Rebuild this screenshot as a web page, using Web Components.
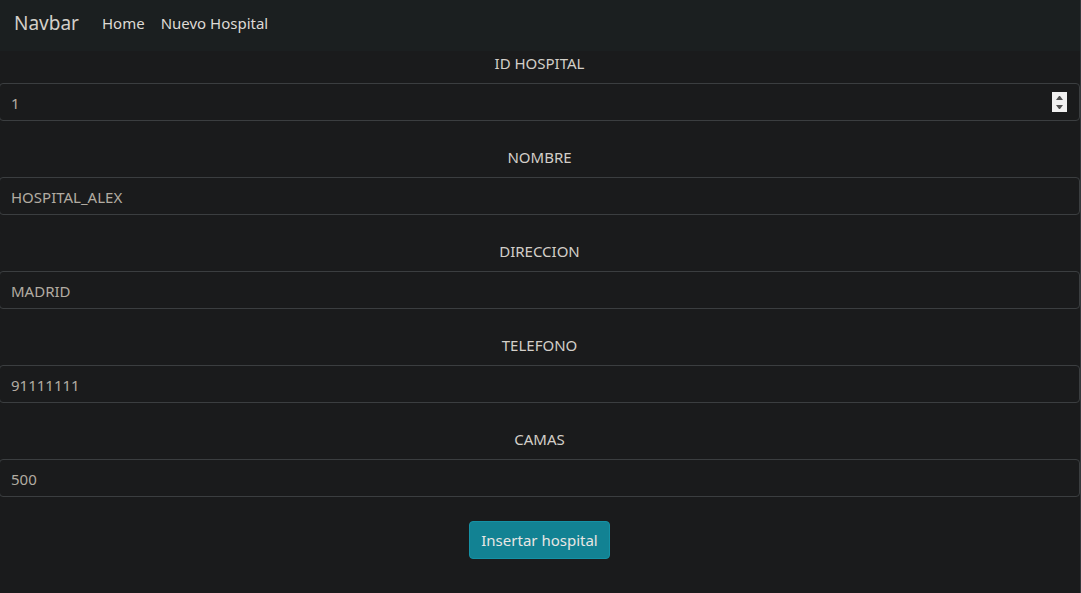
<!DOCTYPE html>
<html lang="es">
<head>
<meta charset="utf-8">
<meta name="viewport" content="width=device-width, initial-scale=1">
<title>Nuevo Hospital</title>
<style>
  html { background: #1a1b1c; }
  body {
    margin: 0;
    min-height: 100vh;
    box-sizing: border-box;
    border-right: 1px solid #35383b;
    color: #d3cfc9;
    font: 15px/24px "Noto Sans", "Open Sans", sans-serif;
    overflow-x: hidden;
  }
</style>
</head>
<body>
<hospital-app></hospital-app>

<template id="app-template">
  <style>
    :host { display: block; }
    main { margin-left: -1px; }
  </style>
  <nav-bar brand="Navbar">
    <nav-item href="#home">Home</nav-item>
    <nav-item href="#create">Nuevo Hospital</nav-item>
  </nav-bar>
  <main><hospital-form></hospital-form></main>
</template>

<template id="nav-template">
  <style>
    :host { display: block; }
    nav {
      display: flex;
      align-items: center;
      min-height: 51px;
      box-sizing: border-box;
      padding: 0 14px 5px;
      background: #1b1f20;
    }
    .brand {
      margin-right: 15px;
      color: #d3cfc9;
      font-size: 19px;
      line-height: 30px;
      text-decoration: none;
    }
    .links { display: flex; }
  </style>
  <nav>
    <a class="brand" href="#"></a>
    <div class="links"><slot></slot></div>
  </nav>
</template>

<template id="item-template">
  <style>
    :host { display: block; }
    a { display: block; padding: 8px; color: #dedad5; text-decoration: none; }
  </style>
  <a><slot></slot></a>
</template>

<template id="form-template">
  <style>
    :host { display: block; }
    form { display: grid; gap: 24px; }
    teal-button { justify-self: center; }
  </style>
  <form>
    <form-field label="ID HOSPITAL" type="number" value="1"></form-field>
    <form-field label="NOMBRE" type="text" value="HOSPITAL_ALEX"></form-field>
    <form-field label="DIRECCION" type="text" value="MADRID"></form-field>
    <form-field label="TELEFONO" type="text" value="91111111"></form-field>
    <form-field label="CAMAS" type="text" value="500"></form-field>
    <teal-button>Insertar hospital</teal-button>
  </form>
</template>

<template id="field-template">
  <style>
    :host { display: grid; gap: 8px; }
    label { text-align: center; }
    input {
      width: 100%;
      height: 38px;
      box-sizing: border-box;
      margin: 0;
      padding: 7px 12px 5px 11px;
      border: 1px solid #3b3e40;
      border-radius: 4px;
      background: #1a1b1c;
      color: #b2aca2;
      font: inherit;
      outline: none;
    }
    input:focus { border-color: #138496; }
    input::-webkit-inner-spin-button {
      -webkit-appearance: none;
      opacity: 1;
      width: 15px;
      height: 20px;
      margin: 0 0 2px;
      background: #f0f0f0 url("data:image/svg+xml,%3Csvg xmlns='http://www.w3.org/2000/svg' width='15' height='20'%3E%3Cpath fill='%23505050' d='M4 8l3-4h1l3 4zM4 13h7l-3 4H7z'/%3E%3C/svg%3E") no-repeat;
    }
  </style>
  <label for="control"></label>
  <input id="control">
</template>

<template id="button-template">
  <style>
    :host { display: block; }
    button {
      display: block;
      min-height: 38px;
      padding: 6px 11px;
      border: 1px solid #1591a5;
      border-radius: 4px;
      background: #128293;
      color: #e8e6e3;
      font: inherit;
      cursor: pointer;
    }
  </style>
  <button type="button"><slot></slot></button>
</template>

<script>
  class TemplateElement extends HTMLElement {
    constructor() {
      super();
      const template = document.getElementById(this.constructor.template);
      this.attachShadow({ mode: "open" }).append(template.content.cloneNode(true));
    }
  }

  customElements.define("nav-item", class extends TemplateElement {
    static template = "item-template";
    connectedCallback() {
      this.shadowRoot.querySelector("a").href = this.getAttribute("href");
    }
  });

  customElements.define("nav-bar", class extends TemplateElement {
    static template = "nav-template";
    connectedCallback() {
      this.shadowRoot.querySelector(".brand").textContent = this.getAttribute("brand");
    }
  });

  customElements.define("form-field", class extends TemplateElement {
    static template = "field-template";
    connectedCallback() {
      const input = this.shadowRoot.querySelector("input");
      this.shadowRoot.querySelector("label").textContent = this.getAttribute("label");
      input.type = this.getAttribute("type");
      input.value = this.getAttribute("value");
    }
  });

  customElements.define("teal-button", class extends TemplateElement {
    static template = "button-template";
  });

  customElements.define("hospital-form", class extends TemplateElement {
    static template = "form-template";
  });

  customElements.define("hospital-app", class extends TemplateElement {
    static template = "app-template";
  });
</script>
</body>
</html>
